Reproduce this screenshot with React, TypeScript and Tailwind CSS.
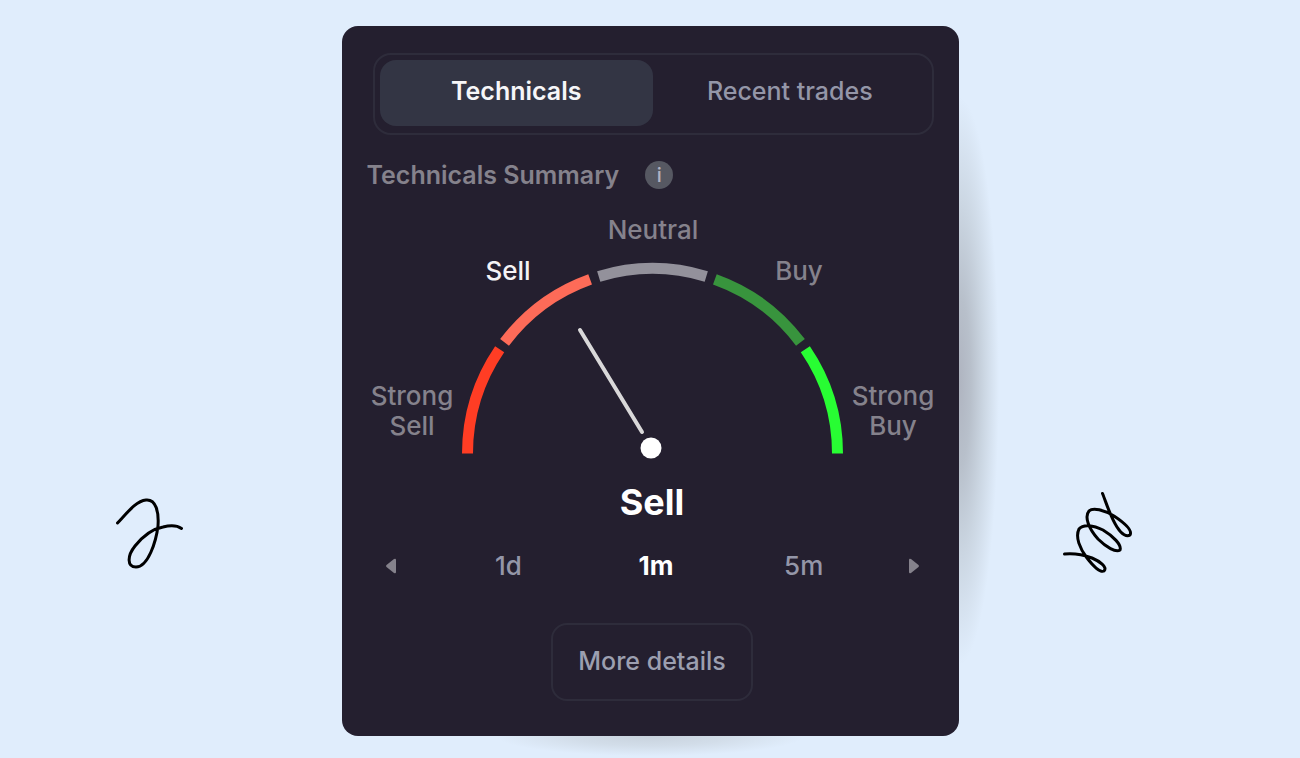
const CENTER_X = 285.5;
const CENTER_Y = 243.5;
const RADIUS = 185;

const segments = [
    { from: 180, to: 145.7, color: "#ff3d24" },
    { from: 143.1, to: 109.7, color: "#fd6b58" },
    { from: 106.9, to: 73.1, color: "#93919b" },
    { from: 70.3, to: 36.9, color: "#38943d" },
    { from: 34.3, to: 0, color: "#28fd33" },
];

const timeframes = ["1d", "1m", "5m"];

function arcPath(from: number, to: number) {
    const point = (deg: number) => {
        const rad = (deg * Math.PI) / 180;
        return `${CENTER_X + RADIUS * Math.cos(rad)} ${CENTER_Y - RADIUS * Math.sin(rad)}`;
    };
    return `M ${point(from)} A ${RADIUS} ${RADIUS} 0 0 1 ${point(to)}`;
}

function Gauge() {
    return (
        <svg viewBox="0 0 567 252" className="mt-[15px] block w-full" role="img" aria-label="Technicals gauge: Sell">
            {segments.map((s) => (
                <path key={s.color} d={arcPath(s.from, s.to)} fill="none" stroke={s.color} strokeWidth="11" />
            ))}
            <path d="M213 120 L275 222" stroke="#d9d8d9" strokeWidth="4" strokeLinecap="round" />
            <circle cx="284" cy="238" r="10.5" fill="#fff" />
            <g textAnchor="middle" fill="#85828c" className="text-[26px] font-medium">
                <text x="286" y="29">Neutral</text>
                <text x="141" y="70" fill="#f4f3f5">Sell</text>
                <text x="432" y="70">Buy</text>
                <text x="45" y="195">Strong</text>
                <text x="45" y="225">Sell</text>
                <text x="526" y="195">Strong</text>
                <text x="526" y="225">Buy</text>
            </g>
        </svg>
    );
}

function TechnicalsCard() {
    return (
        <section className="relative rounded-2xl bg-[#241f2f] px-[25px] pt-[27px] pb-[35px]">
            <div role="tablist" className="ml-1.5 grid grid-cols-2 rounded-[18px] border-2 border-[#2e2c3b] px-[5px] pt-[5px] pb-[7px]">
                <button role="tab" aria-selected="true" className="h-[66px] rounded-2xl bg-[#333544] pb-0.5 text-[25px] font-semibold text-[#f6f6f8]">
                    Technicals
                </button>
                <button role="tab" aria-selected="false" className="h-[66px] rounded-2xl pb-0.5 text-[25px] font-medium text-[#9496a8]">
                    Recent trades
                </button>
            </div>

            <div className="mt-5 flex items-center gap-[26px]">
                <h2 className="text-[25px] leading-10 font-semibold text-[#85828c]">Technicals Summary</h2>
                <button aria-label="About technicals" className="flex size-7 items-center justify-center rounded-full bg-[#565862] text-xl font-medium text-[#b3b3c2]">
                    i
                </button>
            </div>

            <Gauge />

            <div className="pl-1">
                <p className="mt-5 text-center text-4xl font-bold text-white">Sell</p>

                <div className="mt-6 ml-2 mr-2 flex items-center">
                    <button aria-label="Previous timeframe" className="flex h-10 w-6 items-center justify-center">
                        <svg width="12" height="16" viewBox="0 0 12 16" fill="#85828c">
                            <path d="M11 2 V14 Q11 16 9 15 L1.5 9 Q0.5 8 1.5 7 L9 1 Q11 0 11 2Z" />
                        </svg>
                    </button>
                    <div className="grid flex-1 grid-cols-3 pl-8 pr-6">
                        {timeframes.map((t) => (
                            <button
                                key={t}
                                className={t === "1m" ? "text-[26px] leading-10 font-bold text-white" : "text-[26px] leading-10 font-medium text-[#9496a8]"}
                            >
                                {t}
                            </button>
                        ))}
                    </div>
                    <button aria-label="Next timeframe" className="flex h-10 w-6 items-center justify-center">
                        <svg width="12" height="16" viewBox="0 0 12 16" fill="#85828c">
                            <path d="M1 2 V14 Q1 16 3 15 L10.5 9 Q11.5 8 10.5 7 L3 1 Q1 0 1 2Z" />
                        </svg>
                    </button>
                </div>

                <button className="mx-auto mt-[37px] block h-[78px] rounded-2xl border-2 border-[#2e2c3b] px-[25px] text-[25px] font-medium text-[#9c9fb0]">
                    More details
                </button>
            </div>
        </section>
    );
}

export default function App() {
    return (
        <main className="grid min-h-screen grid-cols-[1fr_minmax(0,617px)_1fr] items-start overflow-hidden bg-[#e0edfc] pt-[26px] pb-[22px] font-['Inter',sans-serif]">
            <svg viewBox="0 0 100 110" className="mt-[454px] ml-[100px] w-[100px]" fill="none" stroke="#000" strokeWidth="3" strokeLinecap="round" aria-hidden="true">
                <path d="M17.5 43 C27 33 36 21 46 20 C56 19 59 32 58 46 C56 62 48 87 36 87 C27 87 27 76 35 66 C43 56 52 49 63 47 C71 45 78 46 81.5 48.5" />
            </svg>

            <div className="relative">
                {/* soft shadow showing past the right and bottom edges */}
                <div className="absolute top-[10%] bottom-[10%] left-full w-10 bg-[radial-gradient(100%_50%_at_0%_50%,#afb4c0_0%,#b8c0cb_30%,#cbd6e2_62%,#e0edfc_100%)]" />
                <div className="absolute top-full right-1/4 left-1/4 h-5 bg-[radial-gradient(50%_100%_at_50%_0%,#c8d2dd_0%,#d2dde9_50%,#e0edfc_100%)]" />
                <TechnicalsCard />
            </div>

            <svg viewBox="0 0 100 110" className="mt-[454px] ml-[91px] w-[100px]" fill="none" stroke="#000" strokeWidth="3" strokeLinecap="round" aria-hidden="true">
                <path d="M52.5 13.5 C56 22 60 36 67 47 C72 55 77 57 80 55 C83 50 73 42 64 36 C54 30 43 27 39 31 C34 37 39 49 48 59 C56 67 66 73 70 70 C72 65 63 56 53 50 C43 45 33 44 29 49 C25 57 30 69 37 78 C44 87 50 93 54 91 C58 87 49 81 42 78 C34 75 24 73 14.5 74" />
            </svg>
        </main>
    );
}
